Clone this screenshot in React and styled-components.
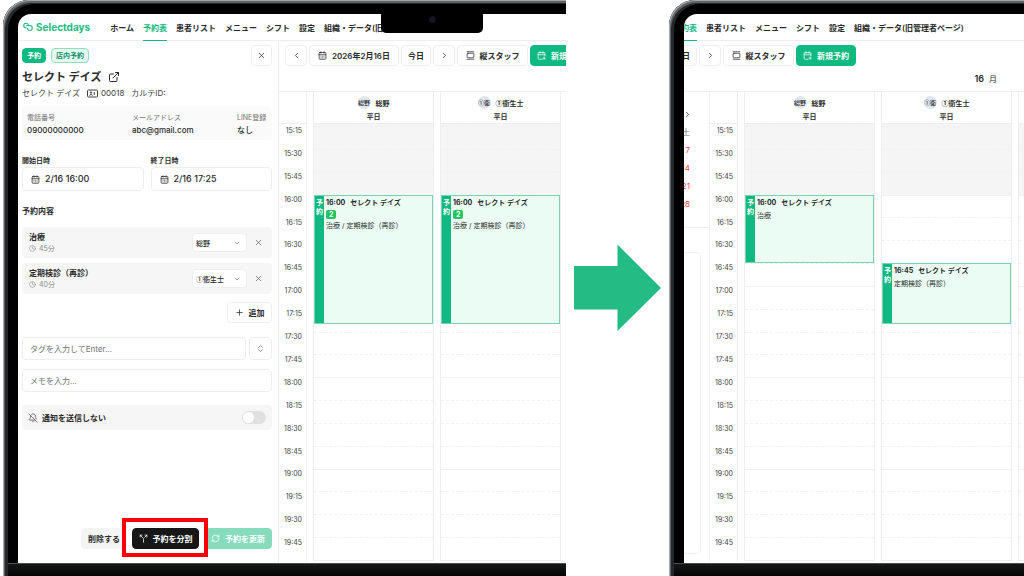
import React from "react";
import styled, { createGlobalStyle, css } from "styled-components";
import {
  BellOff,
  CalendarDays,
  CalendarPlus,
  ChevronDown,
  ChevronLeft,
  ChevronRight,
  ChevronsUpDown,
  Clock,
  ExternalLink,
  GalleryVertical,
  Plus,
  RefreshCw,
  Split,
  X,
} from "lucide-react";

const GlobalStyle = createGlobalStyle`
  *, *::before, *::after { box-sizing: border-box; }
  body {
    margin: 0;
    background: #fff;
    color: #2b2b2b;
    font-family: Inter, "Noto Sans CJK JP", sans-serif;
    font-size: 8px;
    line-height: 12px;
  }
  button, input, select { font: inherit; color: inherit; margin: 0; }
  h1, h2, p, dl, dd { margin: 0; }
`;

const line = "#eeeeef";
const japanese = `"Noto Sans CJK JP", sans-serif`;

const Stage = styled.main`
  display: grid;
  grid-template-columns: 566fr 103fr 355fr;
  min-height: 100vh;
  overflow: hidden;
`;

/* ---------- Laptop frame ---------- */

const Laptop = styled.section`
  position: relative;
  display: flex;
  flex-direction: column;
  min-width: 0;
  margin-left: ${(p) => p.$inset}px;
  padding: 14px 0 0 15px;
  overflow: hidden;
  background: #000;
  border-top-left-radius: 26px;
  box-shadow: inset 1px 1px 0 #a3a6a8, inset 2px 3px 0 #606366, inset 5px 4px 0 #25282a;
`;

const Screen = styled.div`
  display: flex;
  flex-direction: column;
  flex: 1;
  min-width: 0;
  overflow: hidden;
  background: #fff;
  border-top-left-radius: 13px;
`;

const Chin = styled.div`
  flex: none;
  height: 13px;
  margin-left: -10px;
  background: linear-gradient(#161817, #050505);
  border-top: 1px solid #4b4f4d;
`;

const Notch = styled.div`
  position: absolute;
  top: 13px;
  left: 378px;
  display: grid;
  place-items: center;
  width: 102px;
  height: 20px;
  background: #000;
  border-radius: 0 0 5px 5px;
`;

const Lens = styled.span`
  width: 7px;
  height: 7px;
  margin-bottom: 7px;
  border-radius: 50%;
  background: radial-gradient(#0b1a2a 20%, #121315 60%);
`;

/* ---------- Top navigation ---------- */

const TopBar = styled.header`
  display: flex;
  flex: none;
  align-items: stretch;
  gap: 20px;
  height: 27px;
  padding-left: 5px;
  border-bottom: 1px solid ${line};
  white-space: nowrap;
`;

const Brand = styled.a`
  display: flex;
  align-items: center;
  gap: 3px;
  color: #1dbb80;
  font-size: 10px;
  font-weight: 700;
  text-decoration: none;
`;

const Menu = styled.nav`
  display: flex;
  gap: 9px;
  margin-left: ${(p) => (p.$scrolled ? -16 : 0)}px;
`;

const MenuLink = styled.a`
  display: flex;
  flex: none;
  align-items: center;
  margin-bottom: -1px;
  padding-top: 2px;
  border-bottom: 1px solid ${(p) => (p.$active ? "#10b981" : "transparent")};
  color: ${(p) => (p.$active ? "#10b981" : "#2b2b2b")};
  font-weight: 600;
  text-decoration: none;
`;

const Body = styled.div`
  display: flex;
  flex: 1;
  min-height: 0;
`;

/* ---------- Buttons ---------- */

const Button = styled.button`
  display: inline-flex;
  flex: none;
  align-items: center;
  justify-content: center;
  gap: 5px;
  height: 21px;
  padding: 0 6px;
  border: 1px solid ${line};
  border-radius: 4px;
  background: #fff;
  font-weight: 600;
  white-space: nowrap;
  ${(p) => p.$width && css`width: ${p.$width}px; padding: 0;`}
  ${(p) => p.$tone === "green" && css`background: #10b981; border-color: #10b981; color: #fff;`}
  ${(p) => p.$tone === "mint" && css`background: #87dcbe; border-color: #87dcbe; color: #fff;`}
  ${(p) => p.$tone === "grey" && css`background: #f4f4f5; border-color: #f4f4f5;`}
  ${(p) => p.$tone === "dark" && css`background: #171717; border-color: #171717; color: #fff;`}
`;

/* Red frame that calls attention to the split action. */
const SplitButton = styled(Button)`
  position: relative;
  box-shadow: 0 0 0 6px #fff;
  &::after {
    content: "";
    position: absolute;
    inset: -11px -10px -9px -11px;
    border: 4px solid #fb0006;
  }
`;

/* ---------- Booking panel ---------- */

const Panel = styled.aside`
  display: flex;
  flex: none;
  flex-direction: column;
  width: 261px;
  padding: 4px 6px 14px 4px;
  border-right: 1px solid ${line};
`;

const PanelTop = styled.div`
  display: flex;
  align-items: center;
  gap: 5px;
  & > :last-child { margin-left: auto; }
`;

const Tag = styled.span`
  height: 15px;
  padding: 0 4px;
  border: 1px solid ${(p) => (p.$outlined ? "#8fdcc0" : "#10b981")};
  border-radius: 4px;
  background: ${(p) => (p.$outlined ? "#e6faf2" : "#10b981")};
  color: ${(p) => (p.$outlined ? "#0b8f65" : "#fff")};
  font-size: 7px;
  font-weight: 700;
  line-height: 13px;
`;

const PatientName = styled.h1`
  display: flex;
  align-items: center;
  gap: 7px;
  margin-top: 3px;
  font-size: 11px;
  font-weight: 600;
  line-height: 16px;
`;

const PatientMeta = styled.p`
  display: flex;
  align-items: center;
  gap: 7px;
  margin-top: 2px;
  color: #404040;
`;

const IdNumber = styled.span`
  display: flex;
  align-items: center;
  gap: 3px;
`;

const Contact = styled.dl`
  display: grid;
  grid-template-columns: 7fr 7fr 2fr;
  margin-top: 7px;
  padding: 6px 5px 4px;
  border-radius: 4px;
  background: #fafafa;
  white-space: nowrap;
  dt { color: #737373; font-size: 7px; }
  dd { font-weight: 500; }
`;

const DateFields = styled.div`
  display: grid;
  grid-template-columns: repeat(2, minmax(0, 1fr));
  gap: 7px;
  margin-top: 15px;
`;

const FieldLabel = styled.label`
  display: block;
  font-size: 7px;
  font-weight: 700;
`;

const InputBox = styled.div`
  display: flex;
  align-items: center;
  gap: 5px;
  height: 24px;
  padding: 0 8px;
  border: 1px solid ${line};
  border-radius: 4px;
  svg { flex: none; }
  input {
    flex: 1;
    min-width: 0;
    padding: 0;
    border: 0;
    outline: 0;
    background: transparent;
    font-size: 9px;
    font-weight: 500;
  }
`;

const SectionTitle = styled.h2`
  margin-top: 14px;
  font-size: 8px;
  font-weight: 700;
`;

const TreatmentList = styled.div`
  display: flex;
  flex-direction: column;
  gap: 5px;
  margin-top: 10px;
`;

const Treatment = styled.div`
  display: flex;
  align-items: center;
  height: 31px;
  padding: 0 7px;
  border-radius: 4px;
  background: #f6f6f7;
`;

const TreatmentText = styled.div`
  flex: 1;
  line-height: 11px;
  strong { display: block; font-weight: 600; }
  small {
    display: flex;
    align-items: center;
    gap: 3px;
    color: #8a8a8a;
    font-size: 7px;
  }
`;

const SelectBox = styled.div`
  display: grid;
  align-items: center;
  width: 55px;
  & > * { grid-area: 1 / 1; }
  svg { justify-self: end; margin-right: 6px; color: #777; pointer-events: none; }
  select {
    width: 100%;
    height: 19px;
    padding: 0 3px;
    appearance: none;
    border: 1px solid ${line};
    border-radius: 4px;
    background: #fff;
    font-family: ${japanese};
    font-size: 7px;
    font-weight: 500;
  }
`;

const IconButton = styled.button`
  display: grid;
  place-items: center;
  width: 14px;
  height: 14px;
  margin-left: 4px;
  padding: 0;
  border: 0;
  background: none;
  color: #666;
`;

const AddRow = styled.div`
  display: flex;
  justify-content: flex-end;
  margin-top: 8px;
`;

const TagRow = styled.div`
  display: flex;
  gap: 3px;
  margin-top: 14px;
`;

const TextInput = styled.input`
  flex: 1;
  min-width: 0;
  height: 23px;
  padding: 0 7px;
  border: 1px solid ${line};
  border-radius: 4px;
  background: #fff;
  &::placeholder { color: #737373; opacity: 1; }
`;

const SuggestButton = styled(Button)`
  height: 23px;
  color: #737373;
`;

const MemoRow = styled.div`
  display: flex;
  margin-top: 9px;
`;

const NotifyRow = styled.label`
  display: flex;
  align-items: center;
  gap: 4px;
  height: 25px;
  margin-top: 13px;
  padding: 0 6px;
  border-radius: 4px;
  background: #f6f6f7;
  font-weight: 600;
`;

const Toggle = styled.input.attrs({ type: "checkbox" })`
  appearance: none;
  width: 24px;
  height: 13px;
  margin: 0 0 0 auto;
  padding: 1px;
  border-radius: 7px;
  background: #e0e0e1;
  &::before {
    content: "";
    display: block;
    width: 11px;
    height: 11px;
    border-radius: 50%;
    background: #fff;
  }
  &:checked { background: #10b981; }
  &:checked::before { margin-left: auto; }
`;

const Actions = styled.footer`
  display: flex;
  justify-content: flex-end;
  gap: 5px;
  margin-top: auto;
`;

/* ---------- Schedule ---------- */

const Schedule = styled.section`
  display: flex;
  flex: 1;
  flex-direction: column;
  min-width: 0;
  overflow: hidden;
`;

const Toolbar = styled.div`
  display: flex;
  flex: none;
  gap: 2px;
  padding-top: 4px;
  margin-left: ${(p) => (p.$scrolled ? -17 : 6)}px;
`;

const DayHeading = styled.p`
  display: flex;
  flex: none;
  align-items: center;
  justify-content: flex-end;
  gap: 5px;
  height: 25px;
  padding-right: 27px;
  strong { font-size: 9px; font-weight: 600; }
`;

const Board = styled.div`
  display: flex;
  flex: 1;
  padding-bottom: 2px;
  border-top: 1px solid ${line};
`;

const TimeColumn = styled.div`
  display: flex;
  flex: none;
  flex-direction: column;
  width: 28px;
  border-right: 1px solid ${line};
  ${(p) => p.$ruled && css`border-left: 1px solid ${line}; width: 29px;`}
`;

const ColumnHead = styled.div`
  display: flex;
  flex: none;
  flex-direction: column;
  align-items: center;
  gap: 1px;
  height: 32px;
  padding-top: 4px;
  border-bottom: 1px solid ${line};
  background: #fff;
  font-family: ${japanese};
  font-size: 7px;
  font-weight: 600;
`;

const StaffName = styled.div`
  display: flex;
  align-items: center;
  gap: 5px;
`;

const Avatar = styled.span`
  display: grid;
  place-items: center;
  width: 13px;
  height: 13px;
  border-radius: 50%;
  background: #dfe6f0;
  font-size: 6px;
  font-weight: 500;
  white-space: nowrap;
`;

/* One row is five minutes, three rows make a quarter-hour slot. */
const FiveMinuteGrid = styled.div`
  display: grid;
  flex: 1;
  grid-template-columns: minmax(0, 1fr);
  grid-template-rows: repeat(57, minmax(7px, 1fr));
  padding-top: 2px;
`;

const TimeLabel = styled.time`
  grid-row: ${(p) => p.$row} / span 3;
  height: 10px;
  padding-right: 4px;
  color: #404040;
  font-size: 7px;
  line-height: 10px;
  text-align: right;
`;

const Columns = styled.div`
  display: flex;
  flex: 1;
  gap: 6px;
  min-width: 0;
  padding: 0 5px 0 6px;
  ${(p) => p.$wide && css`padding-right: 0; overflow: hidden;`}
`;

const StaffColumn = styled.div`
  display: flex;
  flex: ${(p) => (p.$wide ? "0 0 131px" : "1 1 0")};
  flex-direction: column;
  min-width: 0;
  border: solid ${line};
  border-width: 0 1px 1px;
`;

const StaffGrid = styled(FiveMinuteGrid)`
  background: linear-gradient(#f5f5f5, #f5f5f5) top / 100% 2px no-repeat;
`;

const Slot = styled.div`
  grid-column: 1;
  grid-row: ${(p) => p.$row} / span 3;
  border-top: 1px ${(p) => (p.$hour ? "solid" : "dashed")} #f1f1f3;
  background: ${(p) => (p.$closed ? "#f5f5f5" : "transparent")};
`;

const Appointment = styled.article`
  z-index: 1;
  display: flex;
  grid-column: 1;
  grid-row: ${(p) => p.$row} / span ${(p) => p.$span};
  min-height: 0;
  overflow: hidden;
  border: 1px solid #79d3b1;
  background: #eafcf4;
  font-size: 7px;
  white-space: nowrap;
`;

const Status = styled.span`
  flex: none;
  width: 9px;
  padding-top: 2px;
  background: #10b981;
  color: #fff;
  font-weight: 700;
  line-height: 9px;
  text-align: center;
  white-space: normal;
`;

const AppointmentText = styled.div`
  display: flex;
  flex-direction: column;
  align-items: flex-start;
  gap: 1px;
  padding: 1px 0 0 2px;
`;

const AppointmentTitle = styled.div`
  display: flex;
  gap: 5px;
  font-weight: 700;
`;

const Count = styled.span`
  height: 9px;
  padding: 0 3px;
  border-radius: 2px;
  background: #22c55e;
  color: #fff;
  font-weight: 700;
  line-height: 9px;
`;

/* ---------- Month strip at the left of the second screen ---------- */

const MonthStrip = styled.aside`
  display: flex;
  flex: none;
  flex-direction: column;
  width: 25px;
  padding-bottom: 7px;
`;

const MonthDays = styled.div`
  display: flex;
  flex-direction: column;
  align-items: flex-end;
  gap: 6px;
  width: 6px;
  padding-top: 16px;
  color: #ef4444;
`;

const Weekday = styled.span`
  color: #737373;
`;

const NextMonth = styled(IconButton)`
  width: 9px;
  height: 12px;
  margin-right: -2px;
  color: #262626;
`;

const StripRule = styled.hr`
  width: 100%;
  height: 1px;
  margin: 17px 0 24px;
  border: 0;
  background: ${line};
`;

const StripCard = styled.div`
  flex: 1;
  width: 17px;
  border: solid ${line};
  border-width: 1px 1px 1px 0;
  border-radius: 0 5px 5px 0;
`;

/* ---------- Arrow between the two screens ---------- */

const ArrowArea = styled.div`
  display: grid;
  place-items: center;
`;

const ArrowShape = () => (
  <svg width="87" height="88" viewBox="0 0 87 88" aria-hidden="true">
    <path d="M0 22H43.500V0.500L87 44L43.500 87V65.500H0Z" fill="#24bc84" />
  </svg>
);

const BrandMark = () => (
  <svg width="10" height="10" viewBox="0 0 20 20" fill="none" stroke="currentColor" strokeWidth="2.200" strokeLinecap="round" aria-hidden="true">
    <path d="M6.500 12C3.500 12 1.500 9.800 1.500 7.200C1.500 4.500 3.600 2.500 6.300 2.500C8.200 2.500 9.600 3.400 10.400 4.800" />
    <path d="M6.500 7.500C6.500 7.500 7.500 7 9 7H13.500C16.500 7 18.500 9.200 18.500 12C18.500 14.800 16.500 17 13.800 17C11 17 9 15 9 12.500" />
  </svg>
);

const IdCardIcon = () => (
  <svg width="11" height="9" viewBox="0 0 22 18" fill="none" stroke="currentColor" strokeWidth="2" aria-hidden="true">
    <rect x="1" y="2" width="20" height="14" rx="2" />
    <circle cx="8" cy="7" r="1.500" />
    <path d="M5 13C5 10.500 11 10.500 11 13M14.500 6V12" />
  </svg>
);

const START = 15 * 60 + 15;
const SLOTS = Array.from({ length: 19 }, (_, i) => START + i * 15);
const clock = (m) => `${Math.floor(m / 60)}:${String(m % 60).padStart(2, "0")}`;
const rowOf = (m) => (m - START) / 5 + 1;

const MENU = ["ホーム", "予約表", "患者リスト", "メニュー", "シフト", "設定", "組織・データ(旧管理者ページ)"];

function Navigation({ items, scrolled }) {
  return (
    <Menu $scrolled={scrolled}>
      {items.map((item) => (
        <MenuLink key={item} href="#" $active={item === "予約表"}>
          {item}
        </MenuLink>
      ))}
    </Menu>
  );
}

function ScheduleTools({ scrolled }) {
  return (
    <Toolbar $scrolled={scrolled}>
      {!scrolled && (
        <>
          <Button $width={22} aria-label="前日"><ChevronLeft size={9} /></Button>
          <Button $width={90}><CalendarDays size={9} />2026年2月16日</Button>
        </>
      )}
      <Button $width={30}>今日</Button>
      <Button $width={22} aria-label="翌日"><ChevronRight size={9} /></Button>
      <Button $width={71}><GalleryVertical size={9} />縦スタッフ</Button>
      <Button $width={60} $tone="green"><CalendarPlus size={9} />新規予約</Button>
    </Toolbar>
  );
}

function Times({ ruled }) {
  return (
    <TimeColumn $ruled={ruled}>
      <ColumnHead />
      <FiveMinuteGrid>
        {SLOTS.map((m) => (
          <TimeLabel key={m} $row={rowOf(m)}>{clock(m)}</TimeLabel>
        ))}
      </FiveMinuteGrid>
    </TimeColumn>
  );
}

function Booking({ start, minutes, count, text }) {
  return (
    <Appointment $row={rowOf(start)} $span={minutes / 5}>
      <Status>予約</Status>
      <AppointmentText>
        <AppointmentTitle>
          <span>{clock(start)}</span>
          <span>セレクト デイズ</span>
        </AppointmentTitle>
        {count && <Count>{count}</Count>}
        <span>{text}</span>
      </AppointmentText>
    </Appointment>
  );
}

function Staff({ short, name, wide, booking }) {
  return (
    <StaffColumn $wide={wide}>
      <ColumnHead>
        {name && (
          <>
            <StaffName><Avatar>{short}</Avatar>{name}</StaffName>
            <span>平日</span>
          </>
        )}
      </ColumnHead>
      <StaffGrid>
        {SLOTS.map((m) => (
          <Slot key={m} $row={rowOf(m)} $hour={m % 60 === 0} $closed={m < 960} />
        ))}
        {booking && <Booking {...booking} />}
      </StaffGrid>
    </StaffColumn>
  );
}

function DateField({ id, label, value }) {
  return (
    <div>
      <FieldLabel htmlFor={id}>{label}</FieldLabel>
      <InputBox>
        <CalendarDays size={9} />
        <input id={id} type="text" defaultValue={value} />
      </InputBox>
    </div>
  );
}

function TreatmentRow({ name, minutes, staff }) {
  return (
    <Treatment>
      <TreatmentText>
        <strong>{name}</strong>
        <small><Clock size={7} />{minutes}分</small>
      </TreatmentText>
      <SelectBox>
        <select aria-label={`${name} 担当`} defaultValue={staff}>
          <option>{staff}</option>
        </select>
        <ChevronDown size={8} />
      </SelectBox>
      <IconButton aria-label="削除"><X size={9} /></IconButton>
    </Treatment>
  );
}

function BookingPanel() {
  return (
    <Panel>
      <PanelTop>
        <Tag>予約</Tag>
        <Tag $outlined>店内予約</Tag>
        <Button $width={21} aria-label="閉じる"><X size={9} /></Button>
      </PanelTop>
      <PatientName>セレクト デイズ <ExternalLink size={12} /></PatientName>
      <PatientMeta>
        <span>セレクト デイズ</span>
        <IdNumber><IdCardIcon />00018</IdNumber>
        <span>カルテID:</span>
      </PatientMeta>
      <Contact>
        <div><dt>電話番号</dt><dd>09000000000</dd></div>
        <div><dt>メールアドレス</dt><dd>abc@gmail.com</dd></div>
        <div><dt>LINE登録</dt><dd>なし</dd></div>
      </Contact>
      <DateFields>
        <DateField id="start" label="開始日時" value="2/16 16:00" />
        <DateField id="end" label="終了日時" value="2/16 17:25" />
      </DateFields>
      <SectionTitle>予約内容</SectionTitle>
      <TreatmentList>
        <TreatmentRow name="治療" minutes={45} staff="総野" />
        <TreatmentRow name="定期検診（再診）" minutes={40} staff="①衛生士" />
      </TreatmentList>
      <AddRow><Button $width={45}><Plus size={9} />追加</Button></AddRow>
      <TagRow>
        <TextInput aria-label="タグ" placeholder="タグを入力してEnter..." />
        <SuggestButton $width={23} aria-label="タグ一覧"><ChevronsUpDown size={9} /></SuggestButton>
      </TagRow>
      <MemoRow><TextInput aria-label="メモ" placeholder="メモを入力..." /></MemoRow>
      <NotifyRow>
        <BellOff size={10} strokeWidth={1.5} />
        通知を送信しない
        <Toggle />
      </NotifyRow>
      <Actions>
        <Button $tone="grey">削除する</Button>
        <SplitButton $tone="dark" $width={67}><Split size={9} />予約を分割</SplitButton>
        <Button $tone="mint" $width={68}><RefreshCw size={9} />予約を更新</Button>
      </Actions>
    </Panel>
  );
}

export default function App() {
  const combined = { start: 960, minutes: 85, count: 2, text: "治療 / 定期検診（再診）" };
  return (
    <>
      <GlobalStyle />
      <Stage>
        <Laptop $inset={3}>
          <Screen>
            <TopBar>
              <Brand href="#"><BrandMark />Selectdays</Brand>
              <Navigation items={MENU} />
            </TopBar>
            <Body>
              <BookingPanel />
              <Schedule>
                <ScheduleTools />
                <DayHeading />
                <Board>
                  <Times />
                  <Columns>
                    <Staff short="総野" name="総野" booking={combined} />
                    <Staff short="①衛" name="①衛生士" booking={combined} />
                  </Columns>
                </Board>
              </Schedule>
            </Body>
          </Screen>
          <Chin />
          <Notch><Lens /></Notch>
        </Laptop>

        <ArrowArea><ArrowShape /></ArrowArea>

        <Laptop $inset={0}>
          <Screen>
            <TopBar>
              <Navigation items={MENU.slice(1)} scrolled />
            </TopBar>
            <Body>
              <Schedule>
                <ScheduleTools scrolled />
                <DayHeading><strong>16</strong>月</DayHeading>
                <Board>
                  <MonthStrip>
                    <MonthDays>
                      <NextMonth aria-label="翌月"><ChevronRight size={9} /></NextMonth>
                      <Weekday>土</Weekday>
                      <span>7</span>
                      <span>14</span>
                      <span>21</span>
                      <span>28</span>
                    </MonthDays>
                    <StripRule />
                    <StripCard />
                  </MonthStrip>
                  <Times ruled />
                  <Columns $wide>
                    <Staff wide short="総野" name="総野" booking={{ start: 960, minutes: 45, text: "治療" }} />
                    <Staff wide short="①衛" name="①衛生士" booking={{ start: 1005, minutes: 40, text: "定期検診（再診）" }} />
                    <Staff wide />
                  </Columns>
                </Board>
              </Schedule>
            </Body>
          </Screen>
          <Chin />
        </Laptop>
      </Stage>
    </>
  );
}
